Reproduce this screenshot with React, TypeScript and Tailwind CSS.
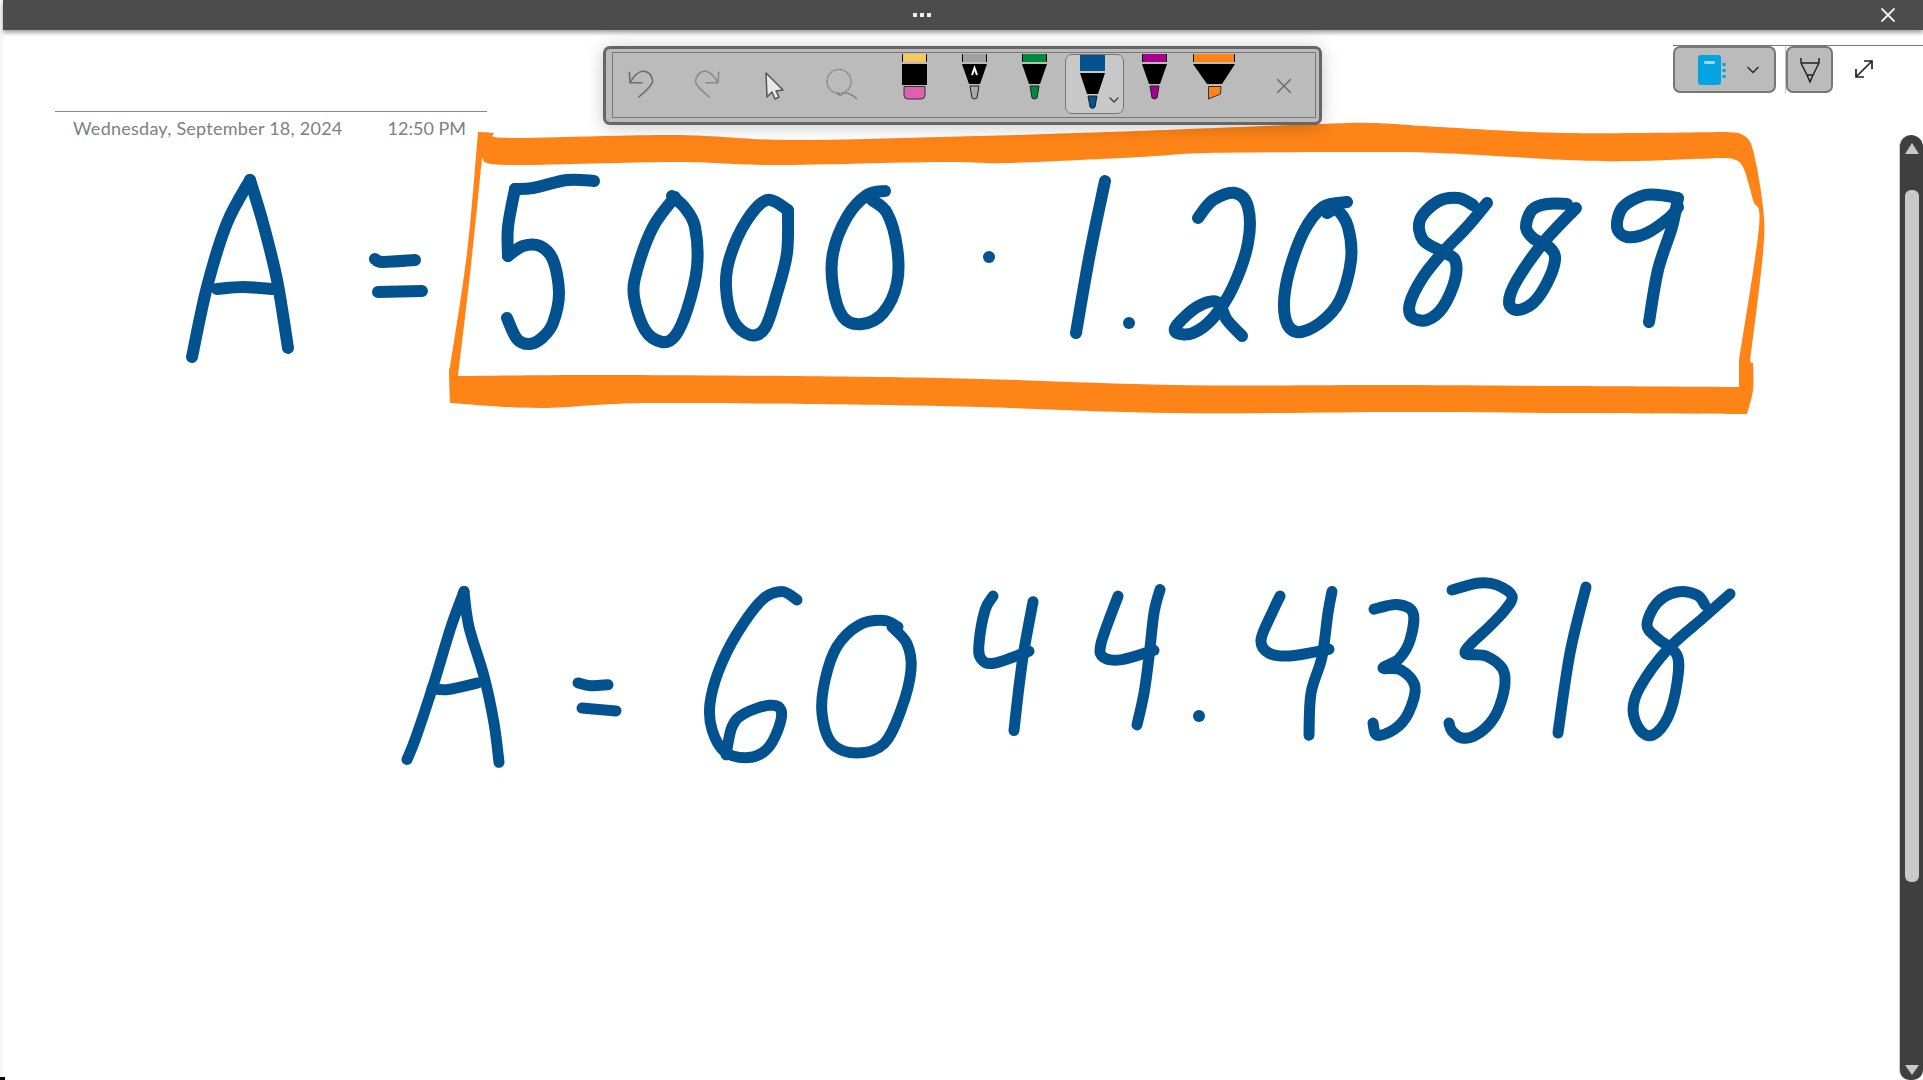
import { ChevronDown, X } from "lucide-react";

type Pt = [number, number];

// catmull-rom through the traced points, so the handwriting stays soft
function curve(pts: Pt[]) {
  let d = "";
  const n = pts.length;
  const at = (i: number) => pts[Math.max(0, Math.min(n - 1, i))];
  for (let i = 0; i < n - 1; i++) {
    const [p0, p1, p2, p3] = [at(i - 1), at(i), at(i + 1), at(i + 2)];
    const c1 = [p1[0] + (p2[0] - p0[0]) / 6, p1[1] + (p2[1] - p0[1]) / 6];
    const c2 = [p2[0] - (p3[0] - p1[0]) / 6, p2[1] - (p3[1] - p1[1]) / 6];
    d += ` C${c1[0].toFixed(1)} ${c1[1].toFixed(1)} ${c2[0].toFixed(1)} ${c2[1].toFixed(1)} ${p2[0]} ${p2[1]}`;
  }
  return d;
}

const smooth = (pts: Pt[]) => `M${pts[0][0]} ${pts[0][1]}` + curve(pts);

// a closed shape made of smooth sides that meet in sharp corners
const sides = (list: Pt[][]) => `M${list[0][0][0]} ${list[0][0][1]}` + list.map(curve).join("") + " Z";

const frameOuter: Pt[][] = [
  [[478, 132], [493, 133], [510, 138], [673, 135], [787, 140], [940, 137], [1107, 132], [1317, 124], [1373, 123], [1440, 127], [1567, 133], [1727, 132]],
  [[1727, 132], [1743, 135], [1753, 150], [1763, 207], [1763, 253], [1750, 362]],
  [[1750, 362], [1753, 363]],
  [[1753, 363], [1753, 390], [1747, 414]],
  [[1747, 414], [1567, 413], [1400, 412], [1173, 413], [940, 406], [657, 403], [540, 408], [450, 403]],
  [[450, 403], [449, 373], [450, 367]],
  [[450, 367], [467, 253], [478, 132]],
];
const frameInner: Pt[][] = [
  [[482, 158], [507, 165], [673, 162], [773, 165], [940, 162], [1007, 163], [1140, 157], [1207, 153], [1357, 152], [1440, 153], [1567, 160], [1633, 161], [1720, 158]],
  [[1720, 158], [1733, 159], [1743, 167], [1753, 200], [1759, 227], [1739, 360]],
  [[1739, 360], [1739, 387]],
  [[1739, 387], [1567, 386], [1400, 385], [1173, 385], [940, 378], [627, 375], [458, 376]],
  [[458, 376], [471, 265], [482, 158]],
];

const rowOne: Pt[][] = [
  // A =
  [[250, 180], [227, 223], [207, 287], [192, 357]],
  [[250, 180], [263, 223], [277, 280], [288, 348]],
  [[217, 289], [243, 287], [273, 289]],
  [[375, 259], [383, 262], [415, 260]],
  [[378, 292], [422, 291]],
  // 5
  [[594, 181], [567, 180], [533, 188], [515, 189]],
  [[515, 189], [508, 227], [508, 256]],
  [[508, 256], [523, 246], [540, 246], [553, 260], [559, 293], [553, 323], [543, 337], [530, 344], [517, 339], [507, 318]],
  // 000
  [[672, 196], [685, 208], [695, 227], [697, 267], [687, 310], [675, 336], [662, 342], [645, 330], [634, 297], [637, 270], [653, 227], [675, 197]],
  [[788, 210], [787, 253], [777, 293], [765, 328], [750, 335], [733, 320], [726, 287], [730, 257], [747, 220], [767, 200], [788, 210]],
  [[885, 191], [867, 195], [847, 217], [833, 253], [833, 287], [843, 317], [862, 324], [883, 313], [897, 283], [897, 247], [887, 213], [872, 200]],
  // 1
  [[1105, 181], [1090, 253], [1076, 333]],
  // 2
  [[1198, 218], [1213, 200], [1235, 193], [1248, 207], [1248, 243], [1233, 287], [1213, 318], [1193, 333], [1177, 333], [1177, 325], [1197, 307], [1217, 302], [1227, 320], [1242, 336]],
  // 0
  [[1347, 202], [1323, 207], [1303, 233], [1287, 280], [1285, 317], [1297, 332], [1320, 323], [1340, 300], [1351, 260], [1348, 227], [1337, 210], [1327, 213]],
  // 8 8 9
  [[1473, 205], [1458, 198], [1437, 202], [1420, 220], [1423, 240], [1443, 252], [1455, 260], [1455, 280], [1443, 307], [1427, 320], [1412, 317], [1410, 303], [1423, 277], [1443, 252], [1467, 227], [1487, 203]],
  [[1567, 204], [1547, 204], [1532, 210], [1526, 227], [1533, 238], [1550, 248], [1555, 260], [1547, 283], [1533, 303], [1517, 310], [1509, 302], [1517, 280], [1543, 243], [1576, 208]],
  [[1677, 198], [1667, 196], [1645, 195], [1623, 207], [1617, 227], [1627, 237], [1647, 233], [1670, 217], [1678, 207]],
  [[1678, 198], [1672, 227], [1658, 270], [1649, 322]],
];

// traced on a crop with y squeezed, hence the rescale below
const rowTwoTraced: Pt[][] = [
  // A =
  [[464, 593], [451, 631], [434, 691], [416, 749], [407, 773]],
  [[464, 593], [469, 631], [484, 684], [494, 734], [499, 776]],
  [[432, 697], [448, 698], [478, 691]],
  [[578, 691], [591, 694], [608, 693]],
  [[582, 718], [616, 721]],
  // 6 0
  [[797, 602], [782, 593], [762, 602], [737, 638], [719, 677], [710, 713], [712, 741], [725, 765], [748, 771], [766, 763], [778, 741], [781, 720], [769, 715], [744, 724], [732, 738], [726, 768]],
  [[898, 631], [884, 624], [859, 629], [837, 652], [825, 688], [822, 724], [832, 756], [857, 766], [884, 756], [901, 720], [911, 677], [907, 649], [892, 631]],
  // 4 4 . 4
  [[993, 598], [985, 613], [979, 649], [981, 665], [994, 670], [1029, 657]],
  [[1033, 604], [1024, 656], [1019, 695], [1014, 742]],
  [[1118, 598], [1101, 649], [1104, 664], [1122, 666], [1154, 656]],
  [[1160, 591], [1154, 616], [1149, 663], [1144, 702], [1137, 736]],
  [[1280, 598], [1272, 616], [1261, 645], [1269, 659], [1290, 662], [1329, 655]],
  [[1332, 593], [1328, 616], [1322, 663], [1311, 702], [1309, 747]],
  // 3
  [[1374, 612], [1397, 607], [1413, 616], [1410, 645], [1399, 665], [1383, 675], [1401, 677], [1415, 695], [1408, 724], [1394, 741], [1377, 747], [1373, 734]],
];

// these were read from a crop at true 3x, so they stay as they are
const rowTwoExact: Pt[][] = [
  // 3
  [[1452, 590], [1479, 583], [1497, 585], [1512, 596], [1505, 610], [1490, 626], [1465, 652], [1486, 656], [1502, 668], [1505, 683], [1500, 705], [1491, 722], [1476, 735], [1462, 738], [1452, 731], [1449, 723]],
  // 1 8
  [[1586, 587], [1570, 653], [1558, 733]],
  [[1705, 605], [1697, 595], [1677, 592], [1657, 603], [1647, 625], [1657, 638], [1677, 655], [1677, 683], [1668, 717], [1653, 735], [1640, 730], [1633, 710], [1640, 687], [1667, 650], [1703, 618], [1730, 594]],
];

const rowTwo: Pt[][] = [
  ...rowTwoTraced.map((s) => s.map(([x, y]): Pt => [x, +(570 + (y - 570) * 0.9333).toFixed(1)])),
  ...rowTwoExact,
];

const dots: Pt[] = [[989, 257], [1129, 323], [1199, 716]];

function Ink() {
  return (
    <svg className="absolute left-0 top-0" width="1923" height="1080" viewBox="0 0 1923 1080">
      <path d={sides(frameOuter) + " " + sides(frameInner)} fill="#fe8418" fillRule="evenodd" />
      {rowOne.map((s, i) => (
        <path key={i} d={smooth(s)} fill="none" stroke="#02528f" strokeWidth="12" strokeLinecap="round" strokeLinejoin="round" />
      ))}
      {rowTwo.map((s, i) => (
        <path key={i} d={smooth(s)} fill="none" stroke="#02528f" strokeWidth="11" strokeLinecap="round" strokeLinejoin="round" />
      ))}
      {dots.map(([x, y], i) => (
        <circle key={i} cx={x} cy={y} r="6" fill="#02528f" />
      ))}
    </svg>
  );
}

// felt pens in the ribbon: cap, black body, coloured nib
function Pen({ color, tip = color, mark = false }: { color: string; tip?: string; mark?: boolean }) {
  return (
    <svg width="25" height="46" viewBox="0 0 25 46" className="block">
      <rect x="0" y="0" width="25" height="8" fill={color} />
      <path d="M0.5 0V8M24.5 0V8" stroke="#000" strokeWidth="1" />
      <path d="M0 10H25L18 30H7Z" fill="#000" />
      {mark && <path d="M10 21L12.5 14L15 21" fill="none" stroke="#fff" strokeWidth="2" />}
      <path d="M8 32H17L15 44Q12.5 46 10 44Z" fill={tip} stroke="#222" strokeWidth="1" />
    </svg>
  );
}

function Eraser() {
  return (
    <svg width="25" height="46" viewBox="0 0 25 46" className="block">
      <rect x="0" y="0" width="25" height="8" fill="#f5c860" />
      <path d="M0.5 0V8M24.5 0V8" stroke="#000" strokeWidth="1" />
      <rect x="0" y="10" width="25" height="21" fill="#000" />
      <path d="M2 32.500H23V41Q23 45 19 45H6Q2 45 2 41Z" fill="#e060b0" stroke="#333" strokeWidth="1" />
    </svg>
  );
}

function Highlighter() {
  return (
    <svg width="42" height="46" viewBox="0 0 42 46" className="block">
      <rect x="0" y="0" width="42" height="8" fill="#fe8418" />
      <path d="M0.500 0V8M41.500 0V8" stroke="#000" strokeWidth="1" />
      <path d="M0 10H42L29 30H14Z" fill="#000" />
      <path d="M15.500 32.500H28L27.500 40L15.500 45Z" fill="#fe8418" stroke="#333" strokeWidth="1" />
    </svg>
  );
}

function Toolbar() {
  return (
    <div className="relative z-10 ml-[116px] mt-[16px] h-[79px] w-[719px] rounded-[7px] border-[3px] border-[#666666] bg-[#bbbbbb] p-[3px] pl-[6px] shadow-[0_2px_18px_rgba(0,0,0,0.22)]">
      <div className="flex h-[66px] items-start border border-[#777777]">
        <svg width="30" height="34" viewBox="0 0 30 34" fill="none" stroke="#6e6e6e" strokeWidth="1.600" className="ml-[12px] mt-[14px] shrink-0">
          <path d="M4.300 4.700L5 15.700H17.700" />
          <path d="M5 15.700Q11 5 18 4Q27 5 27.700 14.700Q26 20 13.300 30.300" />
        </svg>
        <svg width="30" height="34" viewBox="0 0 30 34" fill="none" stroke="#8a8a8a" strokeWidth="1.600" className="ml-[38px] mt-[14px] shrink-0">
          <path d="M25.700 4.700L25 15.700H12.300" />
          <path d="M25 15.700Q19 5 12 4Q4 5 2.300 14.700Q4 20 16.700 30.300" />
        </svg>
        <svg width="22" height="30" viewBox="0 0 22 30" className="ml-[41px] mt-[18px] shrink-0">
          <path d="M2 2L3 26L8 21L11 28L15 26L12 20L19 19Z" fill="#e8e8e8" stroke="#555555" strokeWidth="1.500" strokeLinejoin="round" />
        </svg>
        <svg width="34" height="34" viewBox="0 0 34 34" fill="none" stroke="#777777" className="ml-[40px] mt-[15px] shrink-0">
          <circle cx="13" cy="13.500" r="12" strokeWidth="1.500" strokeDasharray="1.500 1" />
          <path d="M11 24Q14 30 17 25Q23 24 31 31" strokeWidth="1.200" />
        </svg>
        <div className="ml-[42px] mt-[1px] shrink-0"><Eraser /></div>
        <div className="ml-[35px] mt-[1px] shrink-0"><Pen color="#a0a0a0" tip="#a8a8a8" mark /></div>
        <div className="ml-[35px] mt-[1px] shrink-0"><Pen color="#008a3e" /></div>
        <div className="relative ml-[18px] mt-[1px] flex h-[60px] w-[59px] shrink-0 justify-center rounded-[7px] border border-[#777777] bg-[#c8c8c8] pr-[4px]">
          <svg width="25" height="54" viewBox="0 0 25 54" className="block">
            <rect x="0" y="0" width="25" height="16" fill="#02528f" />
            <path d="M0 18H25L18 39H7Z" fill="#000" />
            <path d="M8 41H17L15 52Q12.500 55 10 52Z" fill="#02528f" stroke="#222" strokeWidth="1" />
          </svg>
          <ChevronDown className="absolute bottom-[5px] right-[1px] h-[16px] w-[16px] text-[#444444]" strokeWidth={2.200} />
        </div>
        <div className="ml-[18px] mt-[1px] shrink-0"><Pen color="#a6008c" /></div>
        <div className="ml-[26px] mt-[1px] shrink-0"><Highlighter /></div>
        <X className="ml-[36px] mt-[20px] h-[26px] w-[26px] shrink-0 text-[#6e6e6e]" strokeWidth={1.400} />
      </div>
    </div>
  );
}

function RightTools() {
  return (
    <div className="ml-[351px] mt-[15px] w-[226px] border-t border-[#777777]">
      <div className="flex items-start">
        <div className="flex h-[47px] w-[103px] items-center rounded-[7px] border-2 border-[#777777] bg-[#bbbbbb] pl-[23px]">
          <svg width="29" height="30" viewBox="0 0 29 30">
            <rect x="0" y="0" width="23" height="30" rx="3" fill="#00a4e0" />
            <rect x="6" y="6" width="11" height="3" rx="1" fill="#9fd8f0" />
            <path d="M26 8V11M26 14V17M26 20V23" stroke="#00a4e0" strokeWidth="3" />
          </svg>
          <ChevronDown className="ml-[16px] h-[20px] w-[20px] text-[#333333]" strokeWidth={2} />
        </div>
        <div className="ml-[9px] h-[47px] w-px bg-[#c4c4c4]" />
        <div className="flex h-[47px] w-[47px] items-center justify-center rounded-[7px] border-2 border-[#777777] bg-[#bbbbbb]">
          <svg width="20" height="26" viewBox="0 0 20 26" fill="none" stroke="#222222" strokeWidth="1.500">
            <path d="M1 1V6M19 1V6M1 6H19M1 6L7 18H13L19 6M7 18L10 25L13 18" />
          </svg>
        </div>
        <svg width="20" height="20" viewBox="0 0 20 20" fill="none" stroke="#222222" strokeWidth="1.700" className="ml-[21px] mt-[13px]">
          <path d="M2 18L18 2M10 2H18V10M2 10V18H10" />
        </svg>
      </div>
    </div>
  );
}

export default function App() {
  return (
    <div className="relative flex h-[1080px] w-[1923px] overflow-hidden bg-white font-['Lato',sans-serif]">
      <Ink />
      <div className="relative flex w-[3px] shrink-0 flex-col justify-end bg-[#f6f6f6]">
        <div className="h-[3px] w-[5px] bg-black" />
      </div>
      <div className="relative flex min-w-0 flex-1 flex-col">
        <div className="relative z-20 flex h-[30px] shrink-0 items-center bg-[#4c4c4c] shadow-[0_3px_4px_rgba(0,0,0,0.35)]">
          <div className="ml-[910px] flex gap-[3px]">
            <span className="h-[4px] w-[4px] bg-[#eeeeee]" />
            <span className="h-[4px] w-[4px] bg-[#eeeeee]" />
            <span className="h-[4px] w-[4px] bg-[#eeeeee]" />
          </div>
          <X className="ml-[945px] h-[24px] w-[24px] text-[#eeeeee]" strokeWidth={1.800} />
        </div>
        <div className="flex flex-1">
          <div className="flex w-[1896px] items-start pl-[52px]">
            <div className="mt-[81px] flex h-[40px] w-[432px] shrink-0 justify-between border-t border-[#888888] pl-[18px] pr-[21px] pt-[5px] text-[18px] leading-[22px] text-[#808080]">
              <span className="tracking-[0.25px]">Wednesday, September 18, 2024</span>
              <span>12:50 PM</span>
            </div>
            <Toolbar />
            <RightTools />
          </div>
          <div className="relative flex w-[24px] flex-col">
            <div className="mt-[15px] border-t border-[#777777]" />
            <div className="mt-[89px] flex flex-1 flex-col items-center rounded-b-[10px] rounded-t-[12px] border-l border-[#cccccc] bg-[#3f3f3f] pb-[5px] pt-[8px]">
              <div className="h-0 w-0 border-x-[7px] border-b-[11px] border-x-transparent border-b-[#c8c8c8]" />
              <div className="mt-[36px] h-[692px] w-[14px] rounded-b-[6px] rounded-t-[6px] bg-[#c8c8c8]" />
              <div className="mt-auto h-0 w-0 border-x-[7px] border-t-[10px] border-x-transparent border-t-[#c8c8c8]" />
            </div>
          </div>
        </div>
      </div>
    </div>
  );
}
